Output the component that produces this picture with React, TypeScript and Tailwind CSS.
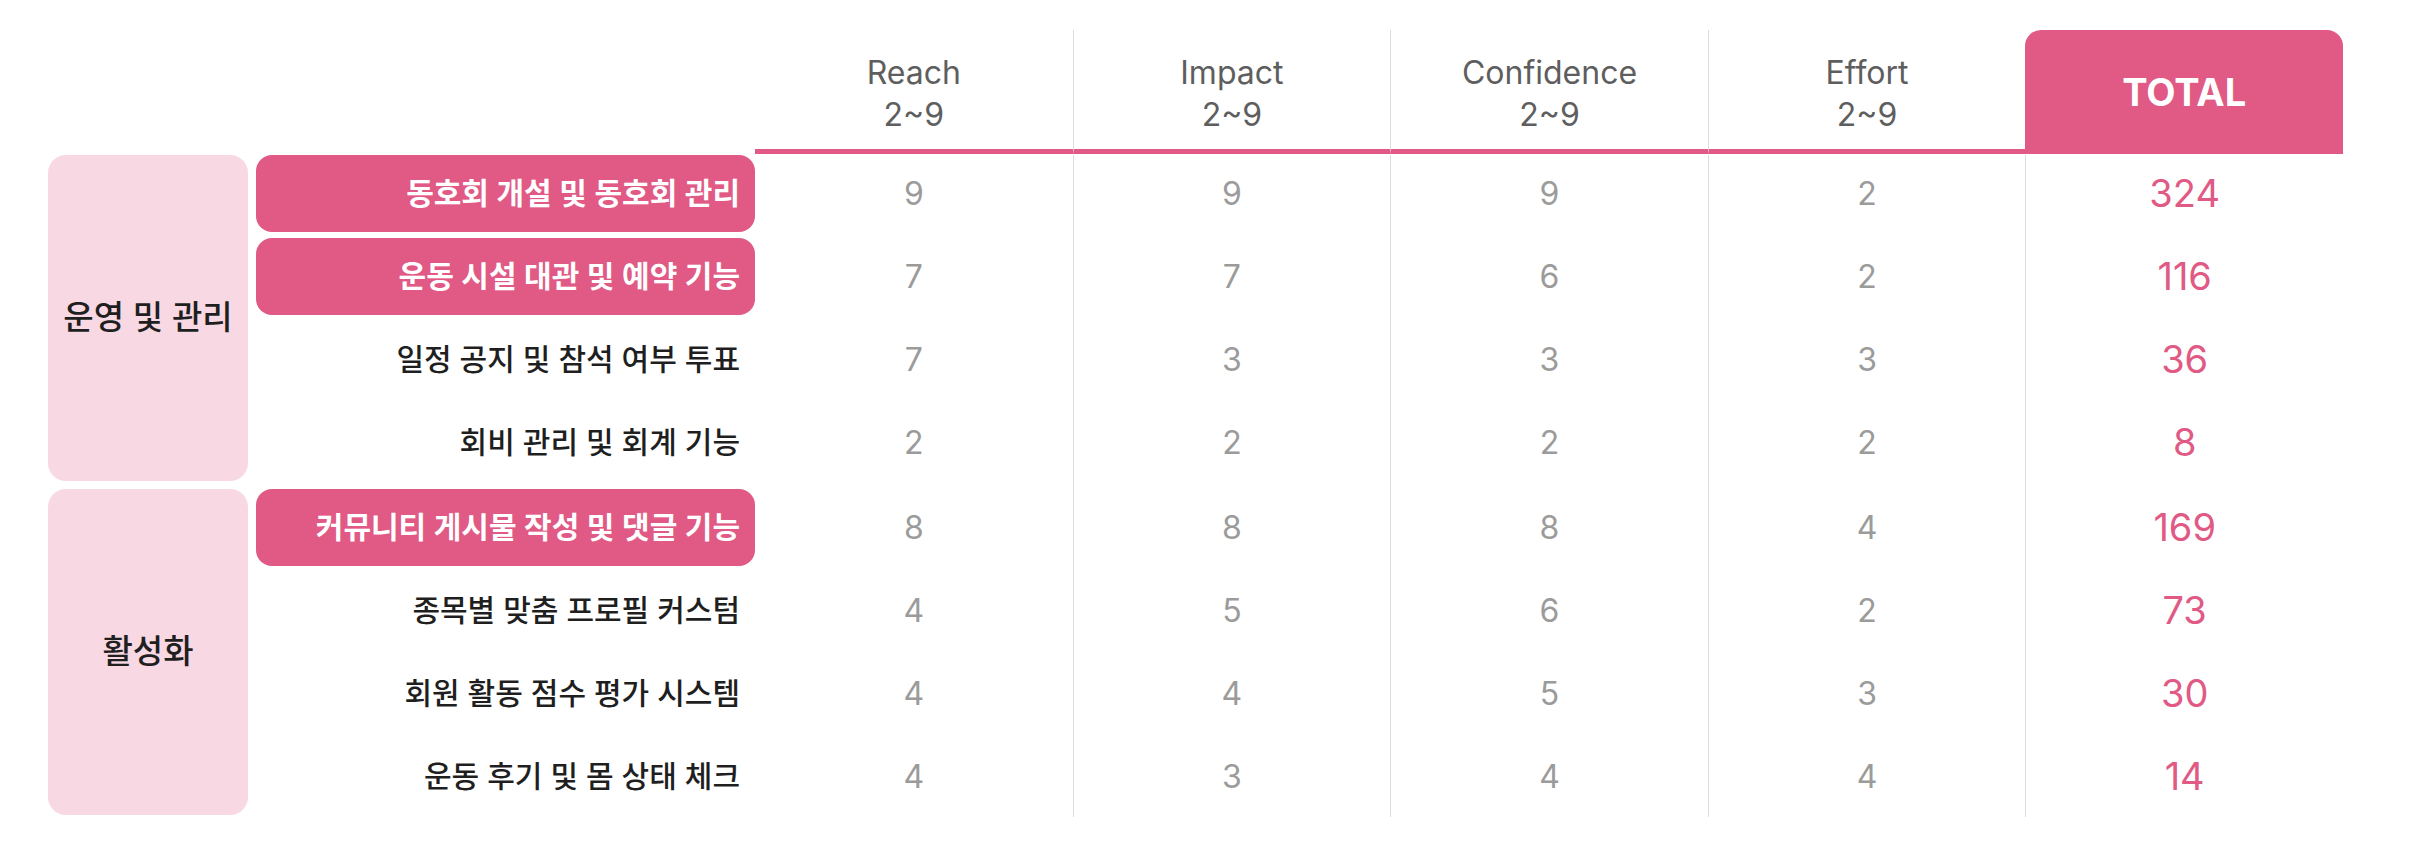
import React from "react"

type Row = {
    name: string
    highlight?: boolean
    scores: [number, number, number, number]
    total: number
}

type Group = {
    label: string
    rows: Row[]
}

const groups: Group[] = [
    {
        label: "운영 및 관리",
        rows: [
            { name: "동호회 개설 및 동호회 관리", highlight: true, scores: [9, 9, 9, 2], total: 324 },
            { name: "운동 시설 대관 및 예약 기능", highlight: true, scores: [7, 7, 6, 2], total: 116 },
            { name: "일정 공지 및 참석 여부 투표", scores: [7, 3, 3, 3], total: 36 },
            { name: "회비 관리 및 회계 기능", scores: [2, 2, 2, 2], total: 8 },
        ],
    },
    {
        label: "활성화",
        rows: [
            { name: "커뮤니티 게시물 작성 및 댓글 기능", highlight: true, scores: [8, 8, 8, 4], total: 169 },
            { name: "종목별 맞춤 프로필 커스텀", scores: [4, 5, 6, 2], total: 73 },
            { name: "회원 활동 점수 평가 시스템", scores: [4, 4, 5, 3], total: 30 },
            { name: "운동 후기 및 몸 상태 체크", scores: [4, 3, 4, 4], total: 14 },
        ],
    },
]

const headers = ["Reach", "Impact", "Confidence", "Effort"]

function HeaderRow() {
    return (
        <div className="flex h-[124px]">
            <div className="w-[707px] shrink-0" />
            {headers.map((h, i) => (
                <div
                    key={h}
                    className={`w-[317.6px] shrink-0 flex items-center justify-center pt-[8px] border-b-[5px] border-b-[#e05a85] text-center text-[32px] leading-[42px] text-[#5e5e5e] ${i > 0 ? "border-l border-l-[#dcdcdc]" : ""}`}
                >
                    <div>
                        <div>{h}</div>
                        <div>2~9</div>
                    </div>
                </div>
            ))}
            <div className="w-[317.6px] shrink-0 flex items-center justify-center rounded-t-[16px] bg-[#e05a85] text-[38px] font-bold text-white">
                TOTAL
            </div>
        </div>
    )
}

// pad goes on every cell so the column rules run through the row gaps
function DataRow({ row, pad }: { row: Row; pad: string }) {
    return (
        <div className="flex">
            <div className={`w-[499px] shrink-0 ${pad}`}>
                <div
                    className={`h-[77px] flex items-center justify-end pr-[15px] rounded-[16px] text-[30px] ${row.highlight ? "bg-[#e05a85] text-white font-semibold" : "text-[#1f1f1f] font-medium"}`}
                >
                    {row.name}
                </div>
            </div>
            {row.scores.map((s, i) => (
                <div key={i} className={`w-[317.6px] shrink-0 ${pad} ${i > 0 ? "border-l border-l-[#dcdcdc]" : ""}`}>
                    <div className="h-[77px] flex items-center justify-center text-[32px] text-[#9b9b9b]">{s}</div>
                </div>
            ))}
            <div className={`w-[317.6px] shrink-0 border-l border-l-[#dcdcdc] ${pad}`}>
                <div className="h-[77px] flex items-center justify-center text-[38px] text-[#e05a85]">{row.total}</div>
            </div>
        </div>
    )
}

export default function App() {
    return (
        <div className="w-[2432px] h-[864px] bg-white pt-[30px] pl-[48px] font-[Inter,'Noto_Sans_CJK_KR',sans-serif]">
            <HeaderRow />
            <div className="pt-px">
                {groups.map((g, gi) => (
                    <div key={g.label} className="flex items-start">
                        <div className="w-[200px] h-[326px] shrink-0 mr-[8px] flex items-center justify-center rounded-[18px] bg-[#f8d8e3] text-[33px] font-medium text-[#1f1f1f]">
                            {g.label}
                        </div>
                        <div className="flex flex-col">
                            {g.rows.map((r, ri) => {
                                const last = ri === g.rows.length - 1
                                const pad = !last ? "pb-[6px]" : gi === 0 ? "pb-[8px]" : "pb-[2px]"
                                return <DataRow key={r.name} row={r} pad={pad} />
                            })}
                        </div>
                    </div>
                ))}
            </div>
        </div>
    )
}
